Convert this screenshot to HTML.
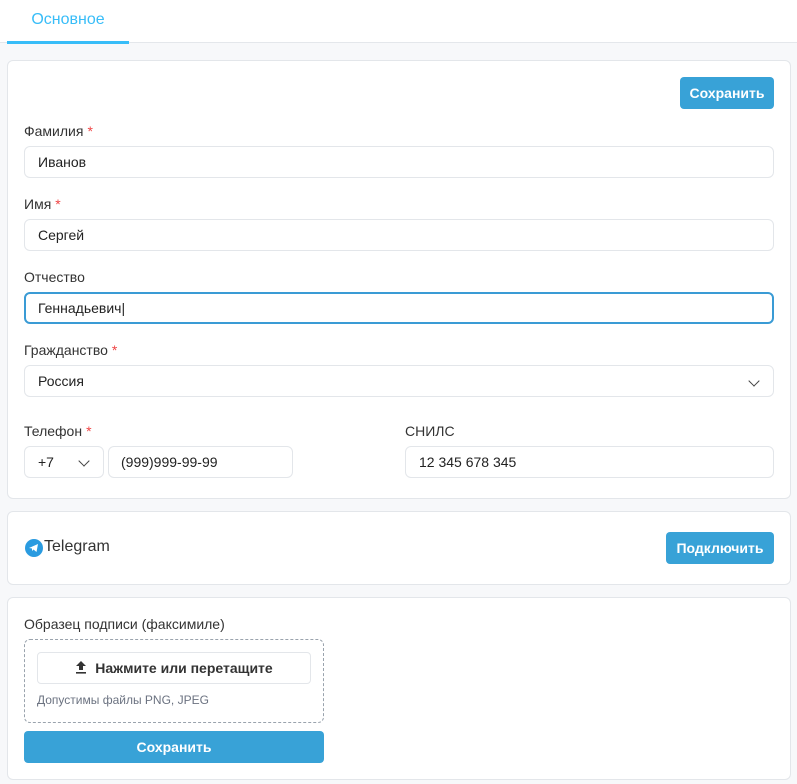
<!DOCTYPE html><html><head><meta charset="utf-8"><style>
*{box-sizing:border-box;margin:0;padding:0}
body{width:797px;height:784px;background:#f7f8fa;font-family:"Liberation Sans",sans-serif;position:relative;overflow:hidden;color:#333}
.top{position:absolute;left:0;top:0;width:797px;height:43px;background:#fff;border-bottom:1px solid #e4e7eb}
.tab{position:absolute;left:7px;top:0;width:122px;height:44px;border-bottom:3px solid #38bdf8;color:#38bdf8;font-size:16px;text-align:center;line-height:40px}
.card{position:absolute;left:7px;width:784px;background:#fff;border:1px solid #e3e6ea;border-radius:6px}
.a{position:absolute}
.lbl{position:absolute;font-size:14px;color:#333}
.lbl b{color:#ef4444;font-weight:normal;margin-left:4px}
.in{position:absolute;height:32px;border:1px solid #e3e6ea;border-radius:6px;font-size:14px;line-height:30px;padding-left:13px;color:#222;background:#fff}
.btn{position:absolute;background:#38a2d7;color:#fff;font-weight:bold;font-size:14px;border-radius:4px;text-align:center}
.chev{position:absolute;width:8px;height:8px;border-right:1.3px solid #444;border-bottom:1.3px solid #444;transform:rotate(45deg)}
</style></head><body>
<div class="top"><div class="tab">Основное</div></div>
<div class="card" style="top:60px;height:439px"></div>
<div class="btn" style="left:680px;top:77px;width:94px;height:32px;line-height:32px">Сохранить</div>
<div class="lbl" style="left:24px;top:123px">Фамилия<b>*</b></div>
<div class="in" style="left:24px;top:146px;width:750px">Иванов</div>
<div class="lbl" style="left:24px;top:196px">Имя<b>*</b></div>
<div class="in" style="left:24px;top:219px;width:750px">Сергей</div>
<div class="lbl" style="left:24px;top:269px">Отчество</div>
<div class="in" style="left:24px;top:292px;width:750px;border:2px solid #3a9bd5;padding-left:12px;line-height:28px">Геннадьевич|</div>
<div class="lbl" style="left:24px;top:342px">Гражданство<b>*</b></div>
<div class="in" style="left:24px;top:365px;width:750px">Россия</div>
<div class="chev" style="left:750px;top:377px"></div>
<div class="lbl" style="left:24px;top:423px">Телефон<b>*</b></div>
<div class="in" style="left:24px;top:446px;width:80px">+7</div>
<div class="chev" style="left:80px;top:457px"></div>
<div class="in" style="left:108px;top:446px;width:185px;padding-left:12px">(999)999-99-99</div>
<div class="lbl" style="left:405px;top:423px">СНИЛС</div>
<div class="in" style="left:405px;top:446px;width:369px">12 345 678 345</div>
<div class="card" style="top:511px;height:74px"></div>
<svg class="a" style="left:25px;top:539px" width="18" height="18" viewBox="0 0 18 18"><circle cx="9" cy="9" r="9" fill="#2a9be0"/><path d="M4 9 L13 5 L11.5 13 L8.5 10.5 L7 12 L7 9.5 Z" fill="#fff"/></svg>
<div class="a" style="left:44px;top:538px;font-size:16px;color:#333">Telegram</div>
<div class="btn" style="left:666px;top:532px;width:108px;height:32px;line-height:32px">Подключить</div>
<div class="card" style="top:597px;height:183px"></div>
<div class="lbl" style="left:24px;top:616px">Образец подписи (факсимиле)</div>
<div class="a" style="left:24px;top:639px;width:300px;height:84px;border:1px dashed #9aa3ad;border-radius:6px"></div>
<div class="a" style="left:37px;top:652px;width:274px;height:32px;border:1px solid #e3e6ea;border-radius:4px;font-size:14px;font-weight:bold;line-height:30px;text-align:center;color:#333"><span style="display:inline-block;vertical-align:middle;margin-right:8px"><svg width="12" height="14" viewBox="0 0 12 14"><path d="M6 1 L11 6 H8 V10 H4 V6 H1 Z" fill="#333"/><rect x="1" y="12" width="10" height="1.6" fill="#333"/></svg></span>Нажмите или перетащите</div>
<div class="a" style="left:37px;top:693px;font-size:12px;color:#6b7280">Допустимы файлы PNG, JPEG</div>
<div class="btn" style="left:24px;top:731px;width:300px;height:32px;line-height:32px">Сохранить</div>
</body></html>
